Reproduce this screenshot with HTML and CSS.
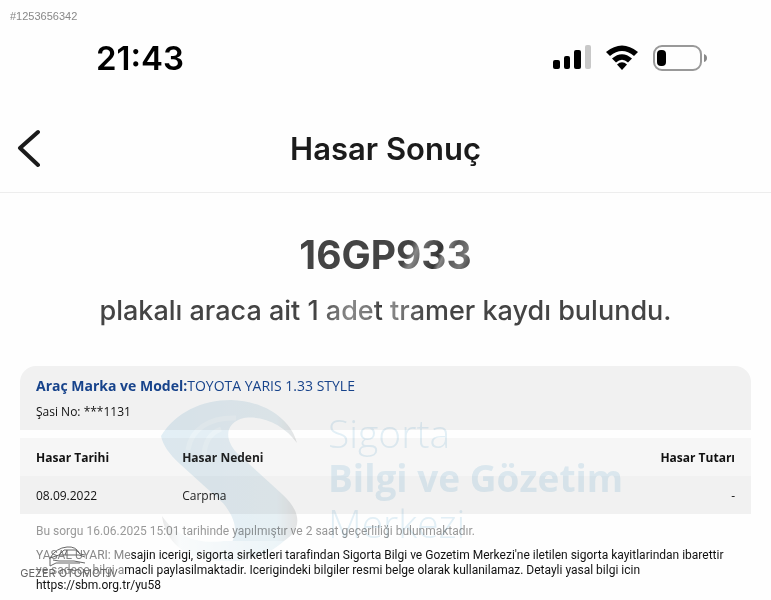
FILE: index.html
```html
<!DOCTYPE html>
<html lang="tr">
<head>
<meta charset="utf-8">
<meta name="viewport" content="width=device-width, initial-scale=1">
<title>Hasar Sonuç</title>
<link rel="stylesheet" href="styles.css">
</head>
<body>
<div class="listing-id">#1253656342</div>
<div class="status">
  <time class="clock">21:43</time>
  <div class="status-icons">
    <svg width="38" height="26" viewBox="0 0 38 26" aria-hidden="true">
      <rect x="0" y="15" width="7" height="9" rx="2"/>
      <rect x="11" y="11" width="6" height="13" rx="2"/>
      <rect x="21" y="5" width="7" height="19" rx="2"/>
      <rect x="32" y="0" width="6" height="24" rx="2" fill="#c8c8c8"/>
    </svg>
    <svg width="34" height="26" viewBox="0 0 34 26" aria-hidden="true">
      <path d="M1 7Q17-6 33 7L29 11Q17 1 5 11Z"/>
      <path d="M7 13.500Q17 5 27 13.500L23 17.500Q17 12 11 17.500Z"/>
      <path d="M12 19.500Q17 15 22 19.500L17 25Z"/>
    </svg>
    <svg width="54" height="26" viewBox="0 0 54 26" aria-hidden="true">
      <rect x="1" y="1" width="47" height="24" rx="8" fill="none" stroke="#999" stroke-width="2"/>
      <rect x="4" y="5" width="9" height="16" rx="4"/>
      <path d="M51 9Q54 10 54 13T51 17Z" fill="#888"/>
    </svg>
  </div>
</div>
<header class="topbar">
  <button class="back" type="button" aria-label="Geri">
    <svg width="24" height="40" viewBox="0 0 24 40" aria-hidden="true"><path d="M22 3 4 19l18 17" fill="none" stroke="#1b1b1b" stroke-width="4" stroke-linecap="round" stroke-linejoin="round"/></svg>
  </button>
  <h1>Hasar Sonuç</h1>
</header>
<main>
  <section class="summary">
    <h2>16GP<span class="glint">933</span></h2>
    <p>plakalı araca ait 1 <span class="shine">adet tra</span>mer kaydı bulundu.</p>
  </section>
  <section class="report">
    <div class="vehicle">
      <p class="model"><strong>Araç Marka ve Model:</strong>TOYOTA YARIS 1.33 STYLE</p>
      <p>Şasi No: ***1131</p>
    </div>
    <table>
      <thead><tr><th>Hasar Tarihi</th><th>Hasar Nedeni</th><th>Hasar Tutarı</th></tr></thead>
      <tbody><tr><td>08.09.2022</td><td>Carpma</td><td>-</td></tr></tbody>
    </table>
    <div class="notes">
      <p class="validity">Bu sorgu 16.06.2025 15:01 tarihinde yapılmıştır ve 2 saat geçerliliği bulunmaktadır.</p>
      <p class="legal"><span class="faded">YASAL UYARI: Me</span>sajin icerigi, sigorta sirketleri tarafindan Sigorta Bilgi ve Gozetim Merkezi'ne iletilen sigorta kayitlarindan ibarettir <span class="faded">ve sadece bilgi a</span>macli paylasilmaktadir. Icerigindeki bilgiler resmi belge olarak kullanilamaz. Detayli yasal bilgi icin <a href="https://sbm.org.tr/yu58">https://sbm.org.tr/yu58</a></p>
    </div>
    <div class="watermark" aria-hidden="true">
      <svg width="160" height="170" viewBox="0 0 160 170">
        <defs>
          <linearGradient id="tail" x1="0" y1="0" x2="1" y2="0"><stop offset="0" stop-color="#a8d0e4"/><stop offset=".85" stop-color="#b4d2df"/><stop offset="1" stop-color="#aaa"/></linearGradient>
          <linearGradient id="base" x1="0" y1="0" x2="1" y2="0"><stop offset="0" stop-color="#bbb"/><stop offset=".15" stop-color="#eef4f7"/><stop offset="1" stop-color="#c4dfeb"/></linearGradient>
        </defs>
        <path fill="url(#tail)" d="M1 36C16 12 42 0 71 0C106 1 131 20 137 43C125 26 104 15 84 18C66 22 63 38 77 53L122 94C146 116 138 132 124 141L66 149C80 137 77 120 63 103L20 64C9 54 3 45 1 36Z"/>
        <path fill="url(#base)" d="M2 116C15 135 36 145 64 141L124 141C109 155 87 162 63 161C31 161 6 146 2 116Z"/>
        <path fill="none" stroke="#fff" stroke-opacity=".25" stroke-width="5" d="M28 50C31 29 50 17 76 18M44 58C44 42 50 33 61 29"/>
      </svg>
      <div class="watermark-text"><span>Sigorta</span><b>Bilgi ve Gözetim</b><span>Merkezi</span></div>
    </div>
    <div class="dealer" aria-hidden="true">
      <svg width="40" height="22" viewBox="0 0 40 22" fill="none" stroke="#666" stroke-width="1">
        <path d="M1 12Q7 2 18 1Q27 0 31 8M1 12L10 9L15 4H27L31 8L36 9M10 9H30L36 11M1 12V20L7 17H31M4 14L10 15H25L36 17M18 4L16 9"/>
      </svg>
      <span>GEZER OTOMOTIV</span>
    </div>
  </section>
</main>
</body>
</html>
```
FILE: styles.css
```css
* { box-sizing: border-box; }
body { margin: 0; background: #fefefe; color: #111; font-family: Inter, sans-serif; }
h1, h2, p { margin: 0; }
.listing-id { padding: 10px 10px 0; height: 32px; font: 11px/13px "Liberation Sans", sans-serif; color: #888; }
.status { display: flex; justify-content: space-between; align-items: center; height: 52px; padding: 0 64px 0 96px; color: #000; }
.clock { font-size: 33px; font-weight: 600; line-height: 40px; }
.status-icons { display: flex; gap: 14px; }
.topbar { display: grid; grid-template-columns: 48px 1fr 48px; align-items: center; height: 109px; padding: 22px 16px 0; border-bottom: 1px solid #ededed; }
.back { border: 0; background: none; padding: 0; display: flex; }
h1 { text-align: center; font-size: 31px; font-weight: 600; line-height: 40px; color: #1b1b1b; }
.summary { padding: 37px 16px 37px; text-align: center; color: #444; }
h2 { font-size: 39px; line-height: 50px; font-weight: 700; }
.summary p { margin-top: 13px; font-size: 27px; line-height: 36px; font-weight: 500; }
.glint, .shine { background-clip: text; -webkit-background-clip: text; color: transparent; }
.glint { background-image: linear-gradient(115deg, #444 22%, #888 30%, #555 42%, #333 55%, #888 60%, #555 68%, #777 82%, #444 92%); }
.shine { background-image: linear-gradient(100deg, #555, #888 25%, #777 45%, #333 55%, #888 65%, #555 90%, #444); }
.report { position: relative; margin: 0 20px; font: 12px/16px "Open Sans", sans-serif; color: #111; }
.vehicle { background: #f1f1f1; height: 64px; padding: 11px 16px; border-radius: 16px 16px 0 0; }
.vehicle p { line-height: 18px; margin-bottom: 8px; }
.vehicle .model { font-size: 14px; color: #17438b; }
table { width: 100%; margin-top: 8px; border-collapse: collapse; table-layout: fixed; }
th, td { height: 38px; padding: 2px 16px 0; text-align: left; }
th { background: #f6f6f6; }
td { background: #f1f1f1; }
th:first-child { width: 20%; }
th:last-child, td:last-child { text-align: right; }
th:nth-child(2), td:nth-child(2) { color: #222; }
.notes { padding: 9px 16px 0; font-family: Roboto, sans-serif; }
.validity { color: #999; }
.legal { margin-top: 9px; line-height: 15px; }
.faded { color: #888; }
.legal a { display: block; color: inherit; text-decoration: none; }
.watermark { position: absolute; left: 140px; top: 34px; display: flex; color: #a8d0e4; opacity: .32; mix-blend-mode: multiply; pointer-events: none; }
.watermark-text { display: flex; flex-direction: column; margin: 10px 0 0 8px; font: 300 39px/45px "Open Sans", sans-serif; }
.watermark-text b { font-size: 37px; font-weight: 700; }
.dealer { position: absolute; left: 0; top: 180px; width: 98px; display: flex; flex-direction: column; align-items: center; color: #666; font: 11px/10px Inter, sans-serif; white-space: nowrap; }
```
